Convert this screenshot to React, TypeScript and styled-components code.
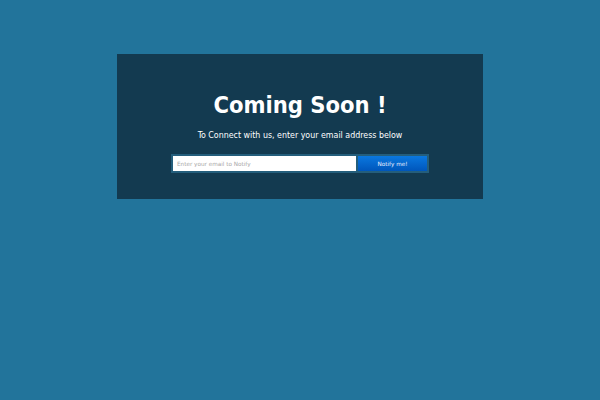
import styled, { createGlobalStyle } from "styled-components";

const GlobalStyle = createGlobalStyle`
  html, body {
    margin: 0;
    padding: 0;
    background-color: #22749b;
    font-family: "DejaVu Sans", Verdana, sans-serif;
  }
`

const Page = styled.div`
  min-height: 400px;
  padding-top: 54px;
  box-sizing: border-box;
`

const Panel = styled.section`
  width: 366px;
  height: 145px;
  margin: 0 auto;
  background-color: #133a50;
  display: flex;
  flex-direction: column;
  align-items: center;
  padding-top: 37px;
  box-sizing: border-box;
  color: #ffffff;
`

const Title = styled.h1`
  margin: 0;
  font-family: "DejaVu Sans Condensed", "DejaVu Sans", sans-serif;
  font-size: 23.5px;
  font-weight: bold;
  line-height: 28px;
`

const Subtitle = styled.p`
  margin: 11px 0 0;
  font-family: "DejaVu Sans Condensed", "DejaVu Sans", sans-serif;
  font-size: 8.8px;
  line-height: 11px;
`

const NotifyForm = styled.form`
  display: flex;
  gap: 2px;
  margin-top: 13px;
  padding: 2px;
  width: 258px;
  box-sizing: border-box;
  background-color: #245e7c;
`

const EmailInput = styled.input`
  flex: 1;
  min-width: 0;
  height: 15px;
  margin: 0;
  padding: 0 4px;
  border: none;
  outline: none;
  background: #ffffff;
  font-family: "DejaVu Sans", Verdana, sans-serif;
  font-size: 5.7px;
  color: #333;

  &::placeholder {
    color: #a8a8a8;
  }
`

const NotifyButton = styled.button`
  width: 69px;
  height: 15px;
  padding: 0;
  border: none;
  background: linear-gradient(to bottom, #0a78e0, #0056bb);
  color: #e8f0ff;
  font-family: "DejaVu Sans", Verdana, sans-serif;
  font-size: 5.7px;
  cursor: pointer;
`

const App = () => {
  return (
    <>
      <GlobalStyle />
      <Page>
        <Panel>
          <Title>Coming Soon !</Title>
          <Subtitle>To Connect with us, enter your email address below</Subtitle>
          <NotifyForm onSubmit={(e) => e.preventDefault()}>
            <EmailInput type="email" placeholder="Enter your email to Notify" />
            <NotifyButton type="submit">Notify me!</NotifyButton>
          </NotifyForm>
        </Panel>
      </Page>
    </>
  )
}

export default App;
